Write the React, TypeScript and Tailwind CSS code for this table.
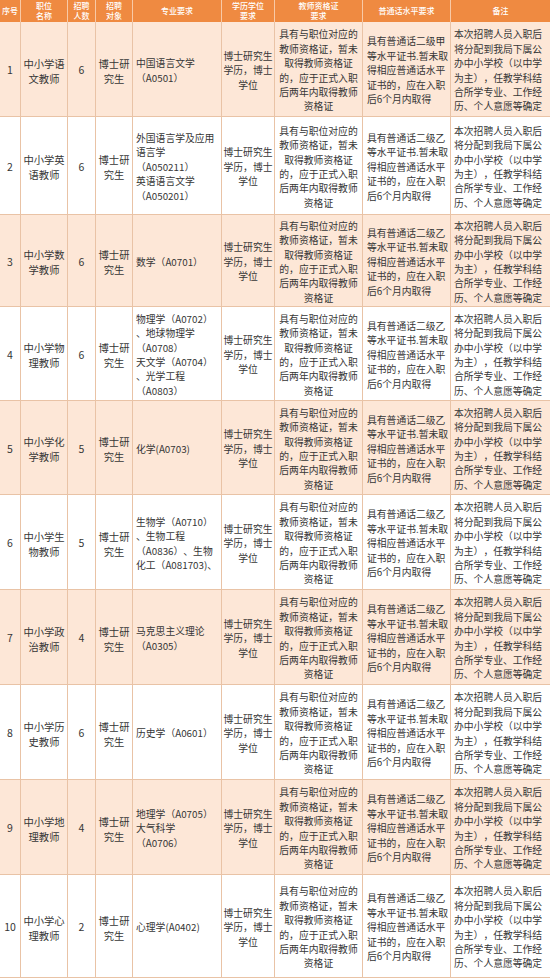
import React from "react";

type Row = {
  no: string;
  name: string[];
  count: string;
  target: string[];
  major: string[];
  level: "甲" | "乙";
};

const rows: Row[] = [
  { no: "1", name: ["中小学语", "文教师"], count: "6", target: ["博士研", "究生"], major: ["中国语言文学", "（A0501）"], level: "甲" },
  { no: "2", name: ["中小学英", "语教师"], count: "6", target: ["博士研", "究生"], major: ["外国语言学及应用", "语言学", "（A050211）", "英语语言文学", "（A050201）"], level: "乙" },
  { no: "3", name: ["中小学数", "学教师"], count: "6", target: ["博士研", "究生"], major: ["数学（A0701）"], level: "乙" },
  { no: "4", name: ["中小学物", "理教师"], count: "6", target: ["博士研", "究生"], major: ["物理学（A0702）", "、地球物理学", "（A0708）", "天文学（A0704）", "、光学工程", "（A0803）"], level: "乙" },
  { no: "5", name: ["中小学化", "学教师"], count: "5", target: ["博士研", "究生"], major: ["化学(A0703)"], level: "乙" },
  { no: "6", name: ["中小学生", "物教师"], count: "5", target: ["博士研", "究生"], major: ["生物学（A0710）", "、生物工程", "（A0836）、生物", "化工（A081703)、"], level: "乙" },
  { no: "7", name: ["中小学政", "治教师"], count: "4", target: ["博士研", "究生"], major: ["马克思主义理论", "（A0305）"], level: "乙" },
  { no: "8", name: ["中小学历", "史教师"], count: "6", target: ["博士研", "究生"], major: ["历史学（A0601）"], level: "乙" },
  { no: "9", name: ["中小学地", "理教师"], count: "4", target: ["博士研", "究生"], major: ["地理学（A0705）", "大气科学", "（A0706）"], level: "乙" },
  { no: "10", name: ["中小学心", "理教师"], count: "2", target: ["博士研", "究生"], major: ["心理学(A0402)"], level: "乙" },
];

const degree = ["博士研究生", "学历，博士", "学位"];
const cert = ["具有与职位对应的", "教师资格证，暂未", "取得教师资格证", "的，应于正式入职", "后两年内取得教师", "资格证"];
const mandarin = (lv: string) => [`具有普通话二级${lv}`, "等水平证书.暂未取", "得相应普通话水平", "证书的，应在入职", "后6个月内取得"];
const note = ["本次招聘人员入职后", "将分配到我局下属公", "办中小学校（以中学", "为主），任教学科结", "合所学专业、工作经", "历、个人意愿等确定"];

const Lines = ({ lines }: { lines: string[] }) => (
  <>
    {lines.map((l, i) => (
      <div key={i} className="whitespace-nowrap">
        {l}
      </div>
    ))}
  </>
);

const headers: string[][] = [
  ["序号"],
  ["职位", "名称"],
  ["招聘", "人数"],
  ["招聘", "对象"],
  ["专业要求"],
  ["学历学位", "要求"],
  ["教师资格证", "要求"],
  ["普通话水平要求"],
  ["备注"],
];

export default function App() {
  return (
    <div
      className="w-[550px] h-[978px] overflow-hidden bg-white text-[#363636] [text-spacing-trim:space-all]"
      style={{ fontFamily: '"Noto Sans CJK SC", "Noto Sans", sans-serif' }}
    >
      <div className="grid grid-cols-[21px_47px_28px_37px_89px_53px_88px_88px_99px] grid-rows-[22px_95px_98px_92px_94px_94px_95px_95px_95px_95px_103px]">
        {headers.map((h, i) => (
          <div
            key={"h" + i}
            className={`bg-[#ef8a41] text-white text-[8px] leading-[10.5px] font-medium flex flex-col items-center justify-center text-center border-[#f8c9a6] ${i < 8 ? "border-r" : ""}`}
          >
            <Lines lines={h} />
          </div>
        ))}
        {rows.map((r, idx) => {
          const bg = idx % 2 === 0 ? "bg-[#fde7d7]" : "bg-white";
          const cell = `${bg} border-b border-[#e9c3a6] text-[9.8px] leading-[14.4px] flex flex-col justify-center pt-[3px]`;
          return (
            <React.Fragment key={r.no}>
              <div className={`${cell} border-r items-center text-[10.5px]`}>{r.no}</div>
              <div className={`${cell} border-r items-center text-center text-[10.3px] leading-[15px]`}>
                <Lines lines={r.name} />
              </div>
              <div className={`${cell} border-r items-center text-[10.5px]`}>{r.count}</div>
              <div className={`${cell} border-r items-center text-center text-[10.3px] leading-[15px]`}>
                <Lines lines={r.target} />
              </div>
              <div className={`${cell} border-r items-start pl-[3px]`}>
                <Lines lines={r.major} />
              </div>
              <div className={`${cell} border-r items-center text-center`}>
                <Lines lines={degree} />
              </div>
              <div className={`${cell} border-r items-center text-center`}>
                <Lines lines={cert} />
              </div>
              <div className={`${cell} border-r items-start pl-[4px]`}>
                <Lines lines={mandarin(r.level)} />
              </div>
              <div className={`${cell} items-start pl-[3px]`}>
                <Lines lines={note} />
              </div>
            </React.Fragment>
          );
        })}
      </div>
    </div>
  );
}
